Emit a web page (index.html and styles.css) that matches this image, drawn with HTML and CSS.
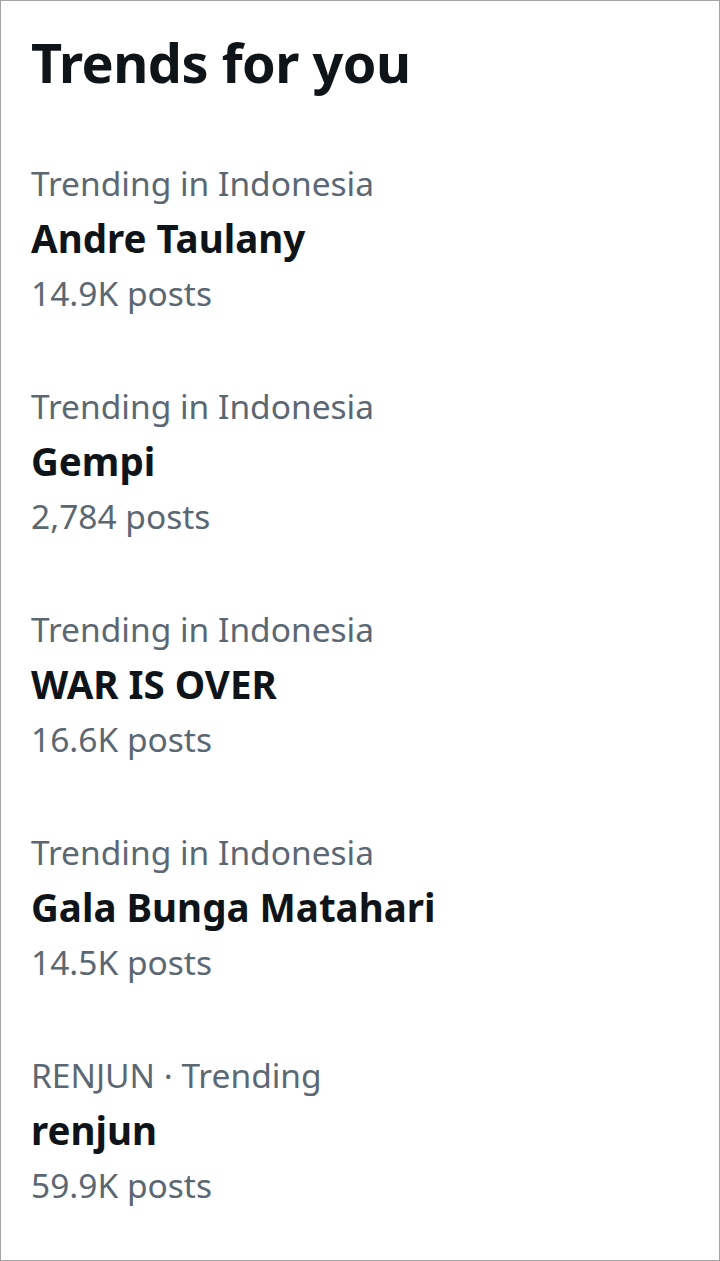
FILE: index.html
```html
<!DOCTYPE html>
<html lang="en">

<head>
    <meta charset="UTF-8">
    <meta name="viewport" content="width=device-width, initial-scale=1.0">
    <title>Trends for you</title>
    <link rel="stylesheet" href="styles.css">
</head>

<body>
    <div class="trends-panel">
        <h2 class="trends-title">Trends for you</h2>

        <div class="trend">
            <p class="trend-meta">Trending in Indonesia</p>
            <p class="trend-name">Andre Taulany</p>
            <p class="trend-count">14.9K posts</p>
        </div>

        <div class="trend">
            <p class="trend-meta">Trending in Indonesia</p>
            <p class="trend-name">Gempi</p>
            <p class="trend-count">2,784 posts</p>
        </div>

        <div class="trend">
            <p class="trend-meta">Trending in Indonesia</p>
            <p class="trend-name">WAR IS OVER</p>
            <p class="trend-count">16.6K posts</p>
        </div>

        <div class="trend">
            <p class="trend-meta">Trending in Indonesia</p>
            <p class="trend-name">Gala Bunga Matahari</p>
            <p class="trend-count">14.5K posts</p>
        </div>

        <div class="trend">
            <p class="trend-meta">RENJUN · Trending</p>
            <p class="trend-name">renjun</p>
            <p class="trend-count">59.9K posts</p>
        </div>
    </div>
</body>
</html>
```

FILE: styles.css
```css
body {
    margin: 0;
    padding: 0;
    background-color: #ffffff;
    font-family: "Noto Sans", "Open Sans", sans-serif;
    color: #0f1419;
}

.trends-panel {
    box-sizing: border-box;
    width: 720px;
    height: 1261px;
    border: 1px solid #a3a3a3;
    padding: 19px 0 0 30px;
    display: flex;
    flex-direction: column;
}

.trends-title {
    margin: 0 0 52px 0;
    font-size: 54px;
    font-weight: 700;
    line-height: 84px;
    letter-spacing: -0.5px;
}

.trend {
    display: flex;
    flex-direction: column;
    padding-bottom: 58px;
}

.trend p {
    margin: 0;
    line-height: 55px;
}

.trend-meta,
.trend-count {
    font-size: 33.5px;
    color: #5b6873;
}

.trend-name {
    font-size: 38.5px;
    font-weight: 700;
}
```
